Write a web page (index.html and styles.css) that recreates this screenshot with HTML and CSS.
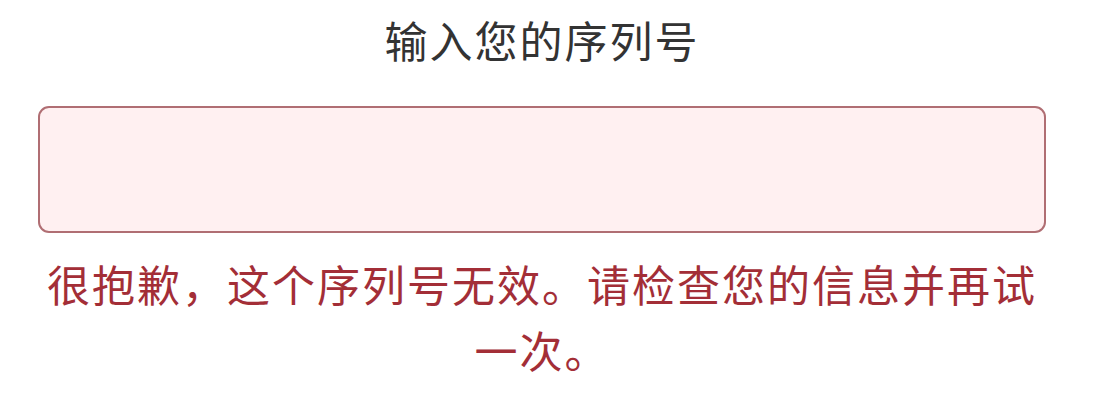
FILE: index.html
```html
<!DOCTYPE html>
<html lang="zh-CN">
<head>
<meta charset="utf-8">
<title>输入您的序列号</title>
<link rel="stylesheet" href="styles.css">
</head>
<body>
  <main class="serial-form">
    <h1 class="serial-title">输入您的序列号</h1>
    <input class="serial-input" type="text" aria-label="序列号">
    <p class="serial-error">很抱歉，这个序列号无效。请检查您的信息并再试一次。</p>
  </main>
</body>
</html>
```

FILE: styles.css
```css
html, body {
  margin: 0;
  padding: 0;
  background: #ffffff;
}

body {
  font-family: "Noto Sans CJK SC", "Noto Sans", sans-serif;
}

.serial-form {
  display: flex;
  flex-direction: column;
  width: 1008px;
  margin: 0 0 0 38px;
  padding-top: 11px;
}

.serial-title {
  margin: 0;
  font-size: 43px;
  letter-spacing: 2px;
  line-height: 56px;
  font-weight: 400;
  color: #333333;
  text-align: center;
}

.serial-input {
  box-sizing: border-box;
  width: 100%;
  height: 127px;
  margin: 39px 0 0;
  padding: 0 20px;
  border: 2.5px solid #b06e73;
  border-radius: 11px;
  background: #fff0f1;
  outline: none;
  font: inherit;
}

.serial-error {
  margin: 17px 0 0;
  font-size: 43px;
  letter-spacing: 2px;
  line-height: 66px;
  font-weight: 400;
  color: #a32e37;
  text-align: center;
}
```
